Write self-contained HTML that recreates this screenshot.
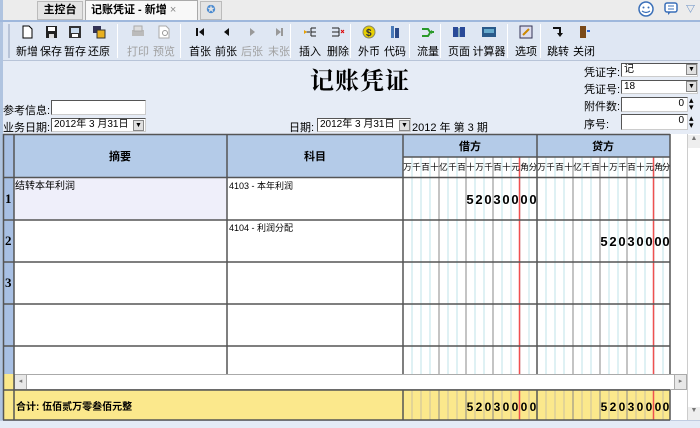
<!DOCTYPE html>
<html><head><meta charset="utf-8"><style>
*{margin:0;padding:0;box-sizing:border-box}
body{width:700px;height:428px;overflow:hidden;background:#e6ecf6;font-family:"Liberation Sans","Noto Sans CJK SC",sans-serif;font-size:11px;color:#000;position:relative}
.a{position:absolute}
.tb{text-align:center;width:28px;top:22px;height:38px}
.tb .l{position:absolute;top:21px;left:-6px;width:40px;text-align:center;font-size:11px}
.tb svg{position:absolute;left:7px;top:3px}
.dis{color:#a0a0a0}
.sep{position:absolute;top:24px;width:1px;height:34px;background:#b8c4d8;border-right:1px solid #fff}
.inp{position:absolute;background:#fff;border:1px solid #555;border-right-color:#ccc;border-bottom-color:#ccc;font-size:10px;padding-left:2px;line-height:12px}
.dd{position:absolute;width:11px;height:11px;background:#e0e0e0;border:1px solid #888;font-size:7px;text-align:center;line-height:10px}
.lbl{position:absolute;font-size:11px}
</style></head><body>
<div class="a" style="left:0;top:0;width:700px;height:20px;background:#ececec"></div>
<div class="a" style="left:0;top:0;width:3px;height:428px;background:#b0c4e0"></div>
<div class="a" style="left:37px;top:1px;width:46px;height:19px;background:#e4e4e4;border:1px solid #bbb;font-size:11px;font-weight:bold;text-align:center;line-height:17px">主控台</div>
<div class="a" style="left:85px;top:0;width:113px;height:21px;background:#f8f8f8;border:1px solid #aaa;border-bottom:none;font-size:11px;font-weight:bold;line-height:18px;padding-left:5px">记账凭证 - 新增 <span style="color:#888;font-weight:normal">×</span></div>
<div class="a" style="left:200px;top:1px;width:22px;height:19px;background:#e4e4e4;border:1px solid #bbb;text-align:center;color:#4a8ad0;line-height:17px">✪</div>
<div class="a" style="left:0;top:20px;width:700px;height:2px;background:#9fb8dc"></div>
<svg class="a" style="left:637px;top:1px" width="18" height="16"><circle cx="9" cy="8" r="7" fill="#fff" stroke="#3a6fb8" stroke-width="1.5"/><circle cx="6.5" cy="6.5" r="1" fill="#3a6fb8"/><circle cx="11.5" cy="6.5" r="1" fill="#3a6fb8"/><path d="M5 10 Q9 13 13 10" fill="none" stroke="#3a6fb8" stroke-width="1.2"/></svg>
<svg class="a" style="left:663px;top:1px" width="16" height="16"><rect x="2" y="2" width="12" height="9" rx="2" fill="#fff" stroke="#3a6fb8" stroke-width="1.5"/><path d="M5 11 L5 14 L8 11" fill="#3a6fb8"/><path d="M5 5h6M5 8h6" stroke="#3a6fb8"/></svg>
<div class="a" style="left:686px;top:2px;color:#3a6fb8;font-size:9px">▽</div>
<div class="a" style="left:3px;top:22px;width:697px;height:39px;background:#dfe7f3;border-bottom:1px solid #b8c4d8"></div>
<div class="a" style="left:8px;top:24px;width:2px;height:34px;background:#b8c4d8"></div>
<div class="a tb" style="left:13px"><svg width="14" height="14"><path d="M3 1h6l3 3v9H3z" fill="#fff" stroke="#000"/></svg><div class="l">新增</div></div>
<div class="a tb" style="left:37px"><svg width="14" height="14"><rect x="2" y="1" width="11" height="12" fill="#222"/><rect x="4" y="2" width="7" height="4" fill="#fff"/><rect x="5" y="9" width="5" height="4" fill="#ddd"/></svg><div class="l">保存</div></div>
<div class="a tb" style="left:61px"><svg width="14" height="14"><rect x="1" y="1" width="12" height="12" fill="#333"/><rect x="3" y="3" width="8" height="5" fill="#cde"/><rect x="4" y="9" width="6" height="3" fill="#fff"/></svg><div class="l">暂存</div></div>
<div class="a tb" style="left:85px"><svg width="14" height="14"><rect x="1" y="1" width="8" height="7" fill="#335"/><rect x="5" y="5" width="8" height="8" fill="#e8b020" stroke="#333"/></svg><div class="l">还原</div></div>
<div class="sep" style="left:117px"></div>
<div class="a tb dis" style="left:124px"><svg width="14" height="14"><rect x="1" y="5" width="12" height="6" fill="#bbb"/><rect x="3" y="1" width="8" height="5" fill="#ddd" stroke="#aaa"/></svg><div class="l">打印</div></div>
<div class="a tb dis" style="left:150px"><svg width="14" height="14"><path d="M2 1h7l3 3v9H2z" fill="#fff" stroke="#aaa"/><circle cx="8" cy="8" r="2.5" fill="none" stroke="#999"/></svg><div class="l">预览</div></div>
<div class="sep" style="left:180px"></div>
<div class="a tb" style="left:186px"><svg width="14" height="14"><rect x="3" y="3" width="2" height="8" fill="#111"/><path d="M11 3v8L6 7z" fill="#111"/></svg><div class="l">首张</div></div>
<div class="a tb" style="left:212px"><svg width="14" height="14"><path d="M10 3v8L5 7z" fill="#111"/></svg><div class="l">前张</div></div>
<div class="a tb dis" style="left:238px"><svg width="14" height="14"><path d="M5 3v8l5-4z" fill="#999"/></svg><div class="l">后张</div></div>
<div class="a tb dis" style="left:265px"><svg width="14" height="14"><path d="M4 3v8l5-4z" fill="#999"/><rect x="9" y="3" width="2" height="8" fill="#999"/></svg><div class="l">末张</div></div>
<div class="sep" style="left:290px"></div>
<div class="a tb" style="left:296px"><svg width="14" height="14"><path d="M1 7h6M8 3h5M8 7h5M8 11h5M8 3v8" stroke="#222" fill="none"/><path d="M1 5l3 2-3 2" fill="#e8a000"/></svg><div class="l">插入</div></div>
<div class="a tb" style="left:324px"><svg width="14" height="14"><path d="M1 3h7M1 7h7M1 11h7M8 3v8" stroke="#222" fill="none"/><path d="M10 5l3 3M13 5l-3 3" stroke="#d00"/></svg><div class="l">删除</div></div>
<div class="sep" style="left:350px"></div>
<div class="a tb" style="left:355px"><svg width="14" height="14"><circle cx="7" cy="7" r="6" fill="#e8d000" stroke="#886"/><text x="4" y="11" font-size="10" font-weight="bold" fill="#333">$</text></svg><div class="l">外币</div></div>
<div class="a tb" style="left:381px"><svg width="14" height="14"><rect x="3" y="1" width="3" height="12" fill="#4a7ab8"/><rect x="7" y="3" width="4" height="10" fill="#2a4a88"/></svg><div class="l">代码</div></div>
<div class="sep" style="left:409px"></div>
<div class="a tb" style="left:414px"><svg width="14" height="14"><path d="M1 4h6l2 3h4M1 11h6l2-3" stroke="#2a9a2a" stroke-width="2" fill="none"/><path d="M10 5l3 2-3 2z" fill="#2a9a2a"/></svg><div class="l">流量</div></div>
<div class="sep" style="left:440px"></div>
<div class="a tb" style="left:445px"><svg width="14" height="14"><rect x="1" y="2" width="5" height="10" fill="#2a4a98"/><rect x="8" y="2" width="5" height="10" fill="#2a4a98"/><rect x="6" y="3" width="2" height="9" fill="#8ab"/></svg><div class="l">页面</div></div>
<div class="a tb" style="left:475px"><svg width="14" height="14"><rect x="0" y="2" width="14" height="10" fill="#2a5a8a"/><rect x="2" y="4" width="10" height="4" fill="#6ac"/></svg><div class="l" style="left:-8px;width:44px">计算器</div></div>
<div class="sep" style="left:507px"></div>
<div class="a tb" style="left:512px"><svg width="14" height="14"><rect x="1" y="1" width="12" height="12" fill="#dde" stroke="#335"/><path d="M4 10l6-6" stroke="#c80" stroke-width="2"/></svg><div class="l">选项</div></div>
<div class="sep" style="left:540px"></div>
<div class="a tb" style="left:544px"><svg width="14" height="14"><path d="M2 3h7v6" stroke="#111" stroke-width="2" fill="none"/><path d="M6 8h6l-3 4z" fill="#111"/></svg><div class="l">跳转</div></div>
<div class="a tb" style="left:570px"><svg width="14" height="14"><rect x="3" y="1" width="6" height="12" fill="#7a4a1a"/><path d="M10 6h3" stroke="#36c" stroke-width="2"/></svg><div class="l">关闭</div></div>
<div class="a" style="left:288px;top:61px;width:144px;text-align:center;font-family:'Liberation Serif','Noto Serif CJK SC',serif;font-size:24px;font-weight:bold;letter-spacing:1px">记账凭证</div>
<div class="lbl" style="left:584px;top:64px">凭证字:</div>
<div class="inp" style="left:621px;top:63px;width:77px;height:14px">记</div><div class="dd" style="left:686px;top:64px">▼</div>
<div class="lbl" style="left:584px;top:81px">凭证号:</div>
<div class="inp" style="left:621px;top:80px;width:77px;height:14px">18</div><div class="dd" style="left:686px;top:81px">▼</div>
<div class="lbl" style="left:584px;top:98px">附件数:</div>
<div class="inp" style="left:621px;top:97px;width:67px;height:15px;text-align:right;padding-right:3px">0</div><div class="a" style="left:689px;top:97px;font-size:9px;line-height:7px">▴<br>▾</div>
<div class="lbl" style="left:584px;top:116px">序号:</div>
<div class="inp" style="left:621px;top:114px;width:67px;height:16px;text-align:right;padding-right:3px">0</div><div class="a" style="left:689px;top:115px;font-size:9px;line-height:7px">▴<br>▾</div>
<div class="lbl" style="left:3px;top:102px">参考信息:</div>
<div class="inp" style="left:51px;top:100px;width:95px;height:15px"></div>
<div class="lbl" style="left:3px;top:119px">业务日期:</div>
<div class="inp" style="left:51px;top:118px;width:95px;height:14px">2012年 3 月31日</div><div class="dd" style="left:133px;top:120px">▼</div>
<div class="lbl" style="left:289px;top:119px">日期:</div>
<div class="inp" style="left:317px;top:118px;width:94px;height:14px">2012年 3 月31日</div><div class="dd" style="left:399px;top:120px">▼</div>
<div class="lbl" style="left:412px;top:119px">2012 年 第 3 期</div>
<div class="a" style="left:3px;top:134px;width:684px;height:286px;background:#fff"></div>
<div class="a" style="left:3px;top:134px;width:11px;height:240px;background:#a8c0e4"></div>
<div class="a" style="left:14px;top:134px;width:656px;height:43px;background:#b4cbe8"></div>
<div class="a" style="left:403px;top:157px;width:267px;height:20px;background:#fff"></div>
<div class="a" style="left:14px;top:177px;width:213px;height:43px;background:#efeffa"></div>
<div class="a" style="left:3px;top:374px;width:11px;height:46px;background:#fbe88c"></div>
<div class="a" style="left:14px;top:390px;width:656px;height:30px;background:#fbe88c"></div>
<div class="a" style="left:14px;top:374px;width:673px;height:16px;background:#fff;border:1px solid #aaa"></div>
<div class="a" style="left:15px;top:375px;width:12px;height:14px;background:#e8e8e8;border-right:1px solid #aaa;font-size:7px;color:#777;line-height:14px;text-align:center">◂</div>
<div class="a" style="left:674px;top:375px;width:12px;height:14px;background:#e8e8e8;border-left:1px solid #aaa;font-size:7px;color:#777;line-height:14px;text-align:center">▸</div>
<div class="a" style="left:687px;top:134px;width:13px;height:286px;background:#fff;border-left:1px solid #ccc"></div>
<div class="a" style="left:688px;top:135px;width:12px;height:13px;background:#eee;font-size:7px;color:#777;text-align:center">▲</div>
<div class="a" style="left:688px;top:407px;width:12px;height:13px;background:#eee;font-size:7px;color:#777;text-align:center">▼</div>
<div class="a" style="left:0;top:420px;width:700px;height:8px;background:#e4ebf6;border-top:1px solid #c0cce0"></div>
<svg class="a" style="left:0;top:0" width="700" height="428">
<g stroke="#bfe3e8" stroke-width="1">
<path d="M412 157V374M421 157V374M430 157V374M439 157V374M448 157V374M457 157V374M466 157V374M475 157V374M484 157V374M493 157V374M502 157V374M511 157V374M520 157V374M529 157V374"/>
<path d="M546 157V374M555 157V374M564 157V374M573 157V374M582 157V374M591 157V374M600 157V374M609 157V374M618 157V374M627 157V374M636 157V374M645 157V374M654 157V374M663 157V374"/>
<path d="M412 390V420M421 390V420M430 390V420M448 390V420M457 390V420M475 390V420M484 390V420M502 390V420M511 390V420M529 390V420M546 390V420M555 390V420M564 390V420M582 390V420M591 390V420M609 390V420M618 390V420M636 390V420M645 390V420M663 390V420" stroke="#c8c0a0"/>
</g>
<g stroke="#888" stroke-width="1">
<path d="M439 157V374M466 157V374M493 157V374M573 157V374M600 157V374M627 157V374M439 390V420M466 390V420M493 390V420M573 390V420M600 390V420M627 390V420"/>
</g>
<g stroke="#f05050" stroke-width="1.5"><path d="M519.5 157V374M653.5 157V374M519.5 390V420M653.5 390V420"/></g>
<g stroke="#555" stroke-width="1.5" fill="none">
<path d="M3 134.5H670M403 157H670M3 177.5H670M3 220H670M3 262H670M3 304H670M3 346H670M3 390H670M3 420H670"/>
<path d="M3.5 134V420M14 134V420M227 134V374M403 134V374M403 390V420M537 134V374M537 390V420M670 134V374M670 390V420"/>
</g>
<g font-family="Liberation Sans,Noto Sans CJK SC,sans-serif" font-size="8.5" text-anchor="middle">
<text x="407.5" y="170">万</text><text x="416.5" y="170">千</text><text x="425.5" y="170">百</text><text x="434.5" y="170">十</text><text x="443.5" y="170">亿</text><text x="452.5" y="170">千</text><text x="461.5" y="170">百</text><text x="470.5" y="170">十</text><text x="479.5" y="170">万</text><text x="488.5" y="170">千</text><text x="497.5" y="170">百</text><text x="506.5" y="170">十</text><text x="515.5" y="170">元</text><text x="524.5" y="170">角</text><text x="533" y="170">分</text>
<text x="541.5" y="170">万</text><text x="550.5" y="170">千</text><text x="559.5" y="170">百</text><text x="568.5" y="170">十</text><text x="577.5" y="170">亿</text><text x="586.5" y="170">千</text><text x="595.5" y="170">百</text><text x="604.5" y="170">十</text><text x="613.5" y="170">万</text><text x="622.5" y="170">千</text><text x="631.5" y="170">百</text><text x="640.5" y="170">十</text><text x="649.5" y="170">元</text><text x="658.5" y="170">角</text><text x="666" y="170">分</text>
</g>
<g font-family="Liberation Sans,Noto Sans CJK SC,sans-serif" font-size="11" font-weight="bold" text-anchor="middle">
<text x="120" y="160">摘要</text><text x="315" y="160">科目</text><text x="470" y="150">借方</text><text x="603" y="150">贷方</text>
</g>
<g font-family="Liberation Sans,sans-serif" font-size="13" font-weight="bold" text-anchor="middle">
<text x="470" y="204">5</text><text x="479" y="204">2</text><text x="488" y="204">0</text><text x="497" y="204">3</text><text x="506" y="204">0</text><text x="515" y="204">0</text><text x="524" y="204">0</text><text x="533" y="204">0</text>
<text x="604" y="246">5</text><text x="613" y="246">2</text><text x="622" y="246">0</text><text x="631" y="246">3</text><text x="640" y="246">0</text><text x="649" y="246">0</text><text x="658" y="246">0</text><text x="666" y="246">0</text>
</g>
<g font-family="Liberation Sans,sans-serif" font-size="12" font-weight="bold" text-anchor="middle">
<text x="470" y="411">5</text><text x="479" y="411">2</text><text x="488" y="411">0</text><text x="497" y="411">3</text><text x="506" y="411">0</text><text x="515" y="411">0</text><text x="524" y="411">0</text><text x="533" y="411">0</text>
<text x="604" y="411">5</text><text x="613" y="411">2</text><text x="622" y="411">0</text><text x="631" y="411">3</text><text x="640" y="411">0</text><text x="649" y="411">0</text><text x="658" y="411">0</text><text x="666" y="411">0</text>
</g>
<g font-family="Liberation Serif,serif" font-size="13" font-weight="bold">
<text x="5" y="203">1</text><text x="5" y="245">2</text><text x="5" y="287">3</text>
</g>
<g font-family="Liberation Sans,Noto Sans CJK SC,sans-serif" font-size="10">
<text x="15" y="189">结转本年利润</text>
<text x="229" y="189" font-size="9">4103 - 本年利润</text>
<text x="229" y="231" font-size="9">4104 - 利润分配</text>
<text x="16" y="410" font-weight="bold">合计: 伍佰贰万零叁佰元整</text>
</g>
</svg>
</body></html>
